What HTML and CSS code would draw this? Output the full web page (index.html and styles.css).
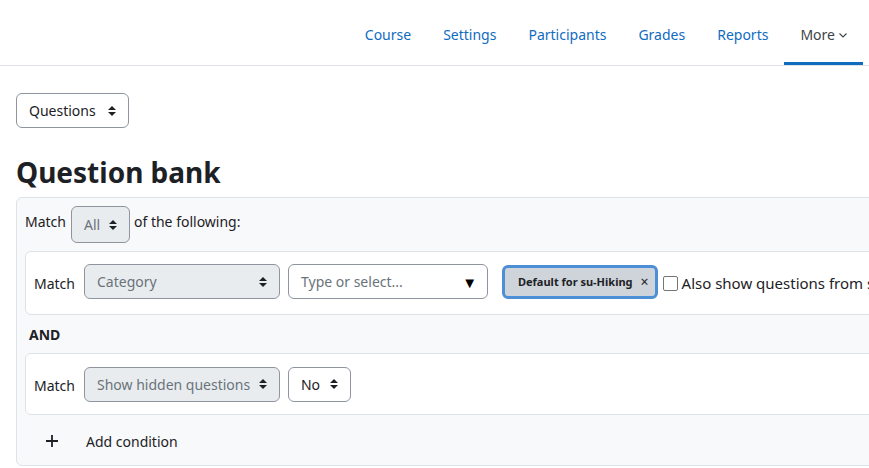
FILE: index.html
```html
<!DOCTYPE html>
<html lang="en">
<head>
    <meta charset="UTF-8">
    <title>Question bank</title>
    <link rel="stylesheet" href="styles.css">
</head>
<body>
    <header class="navbar">
        <nav class="tabs">
            <a href="#">Course</a>
            <a href="#">Settings</a>
            <a href="#">Participants</a>
            <a href="#">Grades</a>
            <a href="#">Reports</a>
            <a href="#" class="active">More
                <svg class="chev" width="8" height="5" viewBox="0 0 8 5"><path d="M0.5 0.5 L4 4 L7.5 0.5" fill="none" stroke="currentColor" stroke-width="1.1"/></svg>
            </a>
        </nav>
    </header>

    <main class="page">
        <div class="select-box questions">Questions
            <svg class="caret" width="8" height="10" viewBox="0 0 8 10"><path d="M4 0 L8 4 L0 4 Z M0 6 L8 6 L4 10 Z" fill="#1d2125"/></svg>
        </div>

        <h2 class="title">Question bank</h2>

        <div class="filter">
            <div class="match-all">
                <span>Match</span>
                <span class="select-box disabled all">All
                    <svg class="caret" width="8" height="10" viewBox="0 0 8 10"><path d="M4 0 L8 4 L0 4 Z M0 6 L8 6 L4 10 Z" fill="#1d2125"/></svg>
                </span>
                <span>of the following:</span>
            </div>

            <div class="cond">
                <span class="lbl">Match</span>
                <span class="select-box disabled wide">Category
                    <svg class="caret" width="8" height="10" viewBox="0 0 8 10"><path d="M4 0 L8 4 L0 4 Z M0 6 L8 6 L4 10 Z" fill="#1d2125"/></svg>
                </span>
                <span class="combo">
                    <span class="placeholder">Type or select...</span>
                    <span class="tri">&#9660;</span>
                </span>
                <span class="tag">Default for su-Hiking <span class="x">&times;</span></span>
                <label class="check"><span class="box"></span>Also show questions from subcategories</label>
            </div>

            <div class="join">AND</div>

            <div class="cond">
                <span class="lbl">Match</span>
                <span class="select-box disabled wide">Show hidden questions
                    <svg class="caret" width="8" height="10" viewBox="0 0 8 10"><path d="M4 0 L8 4 L0 4 Z M0 6 L8 6 L4 10 Z" fill="#1d2125"/></svg>
                </span>
                <span class="select-box no">No
                    <svg class="caret" width="8" height="10" viewBox="0 0 8 10"><path d="M4 0 L8 4 L0 4 Z M0 6 L8 6 L4 10 Z" fill="#1d2125"/></svg>
                </span>
            </div>

            <div class="add">
                <svg class="plus" width="12" height="12" viewBox="0 0 12 12"><path d="M6 0 V12 M0 6 H12" stroke="#1d2125" stroke-width="1.8"/></svg>
                <span>Add condition</span>
            </div>
        </div>
    </main>
</body>
</html>
```

FILE: styles.css
```css
body {
    margin: 0;
    font-family: "Noto Sans", "Open Sans", sans-serif;
    font-size: 14px;
    color: #1d2125;
    background: #fff;
    overflow: hidden;
}

.navbar {
    height: 65px;
    border-bottom: 1px solid #dee2e6;
    display: flex;
    justify-content: flex-end;
    padding-right: 6px;
}

.tabs {
    display: flex;
    align-items: stretch;
}

.tabs a {
    display: flex;
    align-items: center;
    padding: 6px 16px 0;
    color: #0f6cbf;
    text-decoration: none;
    border-bottom: 3px solid transparent;
}

.tabs a.active {
    color: #404448;
    border-bottom-color: #0f6cbf;
}

.chev {
    margin-left: 4px;
    margin-top: 2px;
}

.page {
    padding: 27px 16px 0;
}

.select-box {
    display: inline-flex;
    align-items: center;
    justify-content: space-between;
    box-sizing: border-box;
    height: 35px;
    padding: 0 12px;
    border: 1px solid #8f959e;
    border-radius: 6px;
    background: #fff;
    color: #1d2125;
    white-space: nowrap;
}

.caret {
    margin-left: 8px;
    flex: none;
}

.questions {
    width: 113px;
}

.title {
    margin: 26px 0 7px;
    font-size: 28px;
    font-weight: 700;
    line-height: 36px;
}

.filter {
    width: 1100px;
    background: #f8f9fa;
    border: 1px solid #dee2e6;
    border-radius: 6px;
    padding: 8px 8px 0;
    height: 269px;
    box-sizing: border-box;
}

.match-all {
    display: flex;
    align-items: flex-start;
    gap: 4px;
    line-height: 32px;
}

.disabled {
    background: #e9ecef;
    color: #6a737b;
}

.all {
    width: 59px;
    height: 37px;
    margin-left: 1px;
}

.cond {
    display: flex;
    align-items: center;
    gap: 8px;
    background: #fff;
    border: 1px solid #dee2e6;
    border-radius: 6px;
    padding: 0 8px 3px;
    height: 64px;
    box-sizing: border-box;
    margin-top: 8px;
}

.lbl {
    margin-right: 1px;
    padding-top: 3px;
}

.wide {
    width: 196px;
}

.combo {
    display: inline-flex;
    align-items: center;
    justify-content: space-between;
    box-sizing: border-box;
    width: 200px;
    height: 35px;
    padding: 0 10px 0 12px;
    border: 1px solid #8f959e;
    border-radius: 6px;
    color: #6a737b;
}

.tri {
    color: #000;
    font-size: 15px;
}

.tag {
    display: inline-flex;
    align-items: center;
    box-sizing: border-box;
    height: 34px;
    margin-left: 6px;
    padding: 0 6px 0 13px;
    background: #ced4da;
    border: 3px solid #4c8fd6;
    border-radius: 6px;
    font-size: 11px;
    font-weight: 700;
    color: #1d2125;
    white-space: nowrap;
}

.x {
    margin-left: 8px;
    font-size: 14px;
    font-weight: 400;
}

.check {
    display: flex;
    align-items: center;
    gap: 4px;
    margin-left: -3px;
    padding-top: 3px;
    white-space: nowrap;
    font-size: 15px;
}

.box {
    width: 13px;
    height: 13px;
    border: 1px solid #767676;
    border-radius: 2px;
    background: #fff;
}

.join {
    padding: 10px 4px 0;
    height: 28px;
    font-weight: 700;
}

.cond + .join + .cond {
    margin-top: 0;
    height: 62px;
    padding-bottom: 0;
}

.no {
    width: 63px;
}

.add {
    display: flex;
    align-items: center;
    height: 52px;
    padding-left: 21px;
}

.plus {
    margin-right: 28px;
}
```
